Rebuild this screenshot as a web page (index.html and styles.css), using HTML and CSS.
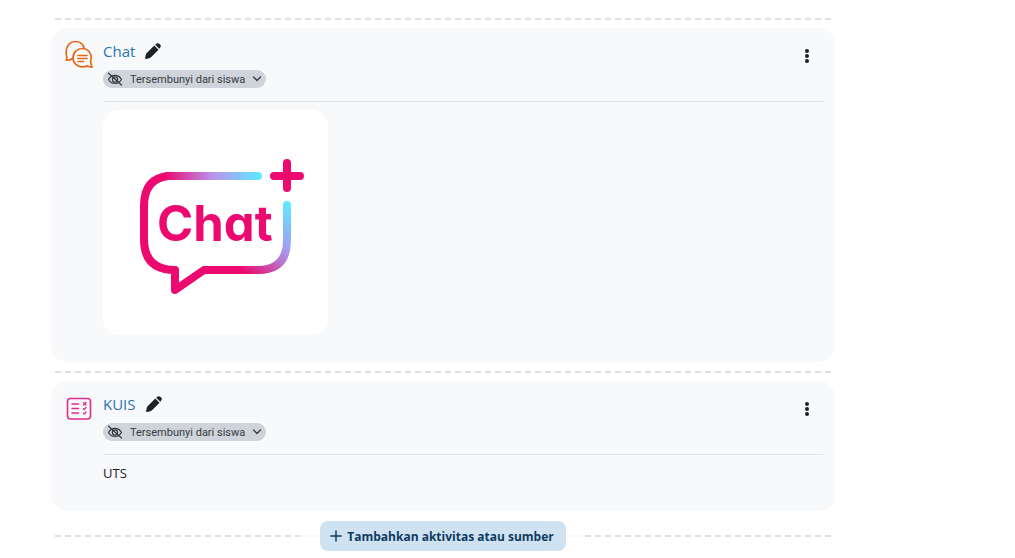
FILE: index.html
```html
<!DOCTYPE html>
<html lang="id">
<head>
<meta charset="utf-8">
<meta name="viewport" content="width=device-width, initial-scale=1">
<title>Aktivitas</title>
<link rel="stylesheet" href="styles.css">
</head>
<body>
<svg class="symbols" aria-hidden="true">
  <symbol id="pen" viewBox="0 0 16 16">
    <path d="M9.300 2.500 13.500 6.700 6 14.200Q5.200 14.900 4.200 15.200L1 15.900Q0 16 .1 15L.8 11.800Q1.100 10.800 1.800 10ZM10.200 1.700 11.600.6Q13-.4 14.300.8L15.300 1.800Q16.400 3 15.400 4.300L14.300 5.800Z"/>
  </symbol>
  <symbol id="eye-off" viewBox="0 0 16 14">
    <g fill="none" stroke="currentColor" stroke-width="1.200" stroke-linecap="round">
      <path d="M1.500 7.500C4.500 2 11.500 2 14.500 7.500C11.500 12.800 4.500 12.800 1.500 7.500Z"/>
      <circle cx="8" cy="7.500" r="2.600"/>
      <path d="M1.500 1.200 14.500 13"/>
    </g>
  </symbol>
  <symbol id="chevron" viewBox="0 0 10 6">
    <path d="M1.500 1 5 4.500 8.500 1" fill="none" stroke="currentColor" stroke-width="1.300" stroke-linecap="round" stroke-linejoin="round"/>
  </symbol>
  <symbol id="dots" viewBox="0 0 6 16">
    <circle cx="3" cy="3" r="2"/><circle cx="3" cy="8" r="2"/><circle cx="3" cy="13" r="2"/>
  </symbol>
</svg>

<main class="section">
  <div class="divider"></div>

  <article class="card">
    <svg class="mod-icon" viewBox="0 0 28 28" fill="none" stroke="#e5681a" stroke-width="1.700" stroke-linecap="round" stroke-linejoin="round" aria-hidden="true">
      <path d="M7.500 18.500C5.500 20 3.500 20.200 1.200 20.200C1.900 18.500 2 17.500 1.500 15.500C-.3 7 5 1.500 10.500 1.500C14.500 1.500 17.800 3.800 19 7.600"/>
      <path d="M25.500 21.500C26 23.800 26.500 25.500 27 27.100C25 27 23.500 26.800 22.200 25.900C16 28.400 8 25.400 8 17.800C8 12.300 12.300 8.500 17.300 8.500C23 8.500 28.300 14 25.500 21.500Z"/>
      <path d="M13 15.500H22M13 18.500H22M13 21.500H18.500"/>
    </svg>
    <div class="content">
      <header class="head">
        <div>
          <div class="title-row">
            <a class="title" href="#chat">Chat</a>
            <button class="icon-button" type="button" aria-label="Edit judul Chat"><svg class="pen"><use href="#pen"/></svg></button>
          </div>
          <button class="pill" type="button">
            <svg class="eye"><use href="#eye-off"/></svg>
            <span>Tersembunyi dari siswa</span>
            <svg class="chevron"><use href="#chevron"/></svg>
          </button>
        </div>
        <button class="icon-button menu" type="button" aria-label="Menu Chat"><svg class="dots"><use href="#dots"/></svg></button>
      </header>
      <div class="description">
        <svg class="picture" viewBox="0 0 225 225" role="img" aria-label="Chat">
          <defs>
            <linearGradient id="top" gradientUnits="userSpaceOnUse" x1="62" y1="0" x2="158" y2="0">
              <stop offset="0" stop-color="#ec0a70"/><stop offset=".5" stop-color="#b994ee"/><stop offset="1" stop-color="#60e9ff"/>
            </linearGradient>
            <linearGradient id="side" gradientUnits="userSpaceOnUse" x1="186" y1="94" x2="145" y2="164">
              <stop offset="0" stop-color="#60e9ff"/><stop offset=".5" stop-color="#a49bf0"/><stop offset=".65" stop-color="#b67bd3"/><stop offset="1" stop-color="#ec0a70"/>
            </linearGradient>
          </defs>
          <g fill="none" stroke-width="8" stroke-linecap="round" stroke-linejoin="round">
            <path stroke="url(#side)" d="M184 95V130Q184 160 155 160H130"/>
            <path stroke="#ec0a70" d="M66 66Q41 68 41 96V129Q41 160 72 160V180L101 160H134"/>
            <path stroke="url(#top)" d="M64 66H155"/>
            <path stroke="#ec0a70" d="M184 53V78M171 66H197"/>
          </g>
          <text class="logo-text" x="54" y="131">Chat</text>
        </svg>
      </div>
    </div>
  </article>

  <div class="divider"></div>

  <article class="card">
    <svg class="mod-icon" viewBox="0 0 28 28" fill="none" stroke="#dc2d8c" stroke-width="1.600" stroke-linecap="round" stroke-linejoin="round" aria-hidden="true">
      <rect x="2.500" y="5.500" width="23" height="20.500" rx="3"/>
      <path d="M7 11H13.500M7 15.500H13.500M7 20H13.500"/>
      <path stroke-width="1.300" d="M18.500 9.500 21 12M21 9.500 18.500 12M18.500 15.700 19.300 16.500 21 14.500M18.500 20.200 19.300 21 21 19"/>
    </svg>
    <div class="content">
      <header class="head">
        <div>
          <div class="title-row">
            <a class="title" href="#kuis">KUIS</a>
            <button class="icon-button" type="button" aria-label="Edit judul KUIS"><svg class="pen"><use href="#pen"/></svg></button>
          </div>
          <button class="pill" type="button">
            <svg class="eye"><use href="#eye-off"/></svg>
            <span>Tersembunyi dari siswa</span>
            <svg class="chevron"><use href="#chevron"/></svg>
          </button>
        </div>
        <button class="icon-button menu" type="button" aria-label="Menu KUIS"><svg class="dots"><use href="#dots"/></svg></button>
      </header>
      <div class="description">UTS</div>
    </div>
  </article>

  <div class="add-row">
    <span class="line"></span>
    <span class="cap"></span>
    <button class="add" type="button">
      <svg class="plus" viewBox="0 0 12 12" aria-hidden="true"><path d="M6 1V11M1 6H11" fill="none" stroke="currentColor" stroke-width="1.500" stroke-linecap="round"/></svg>
      <span>Tambahkan aktivitas atau sumber</span>
    </button>
    <span class="cap"></span>
    <span class="line line-end"></span>
  </div>
</main>
</body>
</html>
```
FILE: styles.css
```css
* {
  box-sizing: border-box;
}

body {
  margin: 0;
  background: #fff;
  color: #1d2125;
  font-family: "Open Sans", "Noto Sans", sans-serif;
  font-size: 13px;
}

button {
  font: inherit;
  color: inherit;
  border: 0;
  padding: 0;
  background: none;
  cursor: pointer;
}

svg {
  display: block;
  fill: currentColor;
}

.symbols {
  display: none;
}

.section {
  margin: 18px 180px 0 51px;
}

.divider,
.line {
  height: 2px;
  background: repeating-linear-gradient(to right, #dee0e3 0 6px, transparent 6px 10px);
}

.divider {
  margin: 0 4px;
}

.card {
  display: flex;
  gap: 10px;
  margin: 8px 0 9px;
  padding: 12px 12px 27px 14px;
  border-radius: 16px;
  background: #f8f9fb;
}

.mod-icon {
  flex: none;
  width: 28px;
  height: 28px;
  fill: none;
}

.content {
  flex: 1;
  min-width: 0;
}

.head {
  display: flex;
  justify-content: space-between;
  align-items: flex-start;
  padding-bottom: 13px;
  border-bottom: 1px solid #dee2e6;
}

.title-row {
  display: flex;
  align-items: center;
  gap: 10px;
  height: 22px;
}

.title {
  color: #2a73b3;
  font-size: 15px;
  line-height: 22px;
  text-decoration: none;
}

.pen {
  width: 16px;
  height: 16px;
}

.pill {
  display: flex;
  align-items: center;
  gap: 7px;
  height: 18px;
  margin-top: 8px;
  padding: 0 4px;
  border-radius: 9px;
  background: #ced4da;
  color: #343a40;
  font-family: Roboto, "Open Sans", sans-serif;
  font-size: 11px;
}

.eye {
  width: 16px;
  height: 14px;
}

.chevron {
  width: 10px;
  height: 6px;
}

.menu {
  margin: 8px 13px 0 0;
}

.dots {
  width: 6px;
  height: 16px;
}

.description {
  padding-top: 8px;
  line-height: 21px;
}

.picture {
  width: 225px;
  height: 225px;
  border-radius: 16px;
  background: #fff;
}

.logo-text {
  fill: #ec0a70;
  font-family: Inter, sans-serif;
  font-size: 49px;
  font-weight: 700;
  font-feature-settings: "cv11";
}

.add-row {
  display: flex;
  align-items: center;
  margin: 10px 4px 7px;
}

.line {
  flex: 1;
}

.line-end {
  background: repeating-linear-gradient(to left, #dee0e3 0 6px, transparent 6px 10px);
}

.cap {
  width: 18px;
  height: 4px;
  background: #fafbfb;
}

.add {
  display: flex;
  align-items: center;
  gap: 5px;
  height: 30px;
  padding: 0 12px 0 10px;
  border-radius: 8px;
  background: #cfe2f2;
  color: #0f3a5f;
  font-size: 12px;
  font-weight: 700;
}

.plus {
  width: 12px;
  height: 12px;
}
```
